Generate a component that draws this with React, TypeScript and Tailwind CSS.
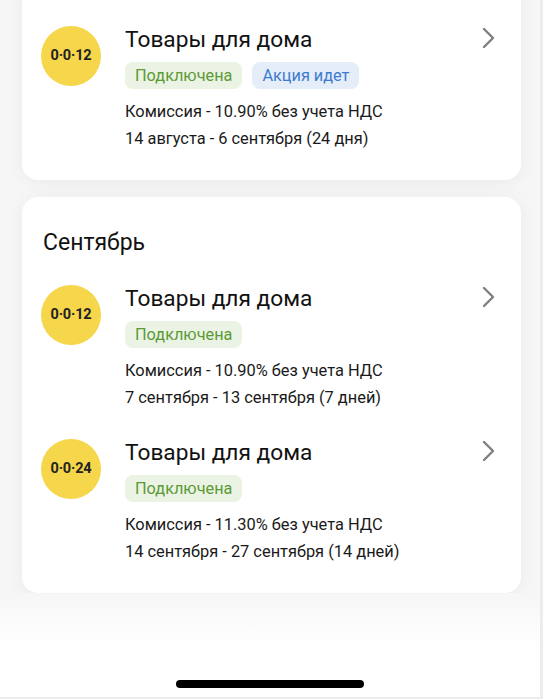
import React from "react";

type Item = {
  code: string;
  badges: { text: string; kind: "green" | "blue" }[];
  commission: string;
  dates: string;
};

function Chevron() {
  return (
    <svg width="14" height="22" viewBox="0 0 14 22" className="shrink-0">
      <polyline
        points="2,2 11,11 2,20"
        fill="none"
        stroke="#7f7f7f"
        strokeWidth="2.4"
        strokeLinecap="round"
        strokeLinejoin="round"
      />
    </svg>
  );
}

function Row({ item }: { item: Item }) {
  return (
    <div className="flex items-start">
      <div className="w-[60px] h-[60px] rounded-full bg-[#f6d64a] flex items-center justify-center shrink-0">
        <span className="text-[14.5px] font-bold text-[#222] tracking-[-0.2px]">{item.code}</span>
      </div>
      <div className="ml-[24px] flex-1 min-w-0">
        <div className="text-[22.7px] leading-[28px] text-[#111]">Товары для дома</div>
        <div className="mt-[8px] flex gap-[10px]">
          {item.badges.map((b) => (
            <span
              key={b.text}
              className={
                b.kind === "green"
                  ? "h-[27px] px-[10px] rounded-[8px] bg-[#ebf3e4] text-[#5c9a35] text-[16.3px] leading-[27px]"
                  : "h-[27px] px-[10px] rounded-[8px] bg-[#e5edf9] text-[#3d7bd0] text-[16.3px] leading-[27px]"
              }
            >
              {b.text}
            </span>
          ))}
        </div>
        <div className="mt-[9px] text-[16.4px] leading-[27px] text-[#1a1a1a]">{item.commission}</div>
        <div className="text-[16.4px] leading-[27px] text-[#1a1a1a]">{item.dates}</div>
      </div>
      <div className="mt-[1px] mr-[25px]">
        <Chevron />
      </div>
    </div>
  );
}

export default function App() {
  const first: Item = {
    code: "0·0·12",
    badges: [
      { text: "Подключена", kind: "green" },
      { text: "Акция идет", kind: "blue" },
    ],
    commission: "Комиссия - 10.90% без учета НДС",
    dates: "14 августа - 6 сентября (24 дня)",
  };
  const sep: Item[] = [
    {
      code: "0·0·12",
      badges: [{ text: "Подключена", kind: "green" }],
      commission: "Комиссия - 10.90% без учета НДС",
      dates: "7 сентября - 13 сентября (7 дней)",
    },
    {
      code: "0·0·24",
      badges: [{ text: "Подключена", kind: "green" }],
      commission: "Комиссия - 11.30% без учета НДС",
      dates: "14 сентября - 27 сентября (14 дней)",
    },
  ];

  return (
    <div
      className="w-[543px] h-[699px] overflow-hidden bg-white border-r-[3px] border-b-[2px] border-[#ececec] flex flex-col"
      style={{ fontFamily: "Roboto, 'Noto Sans', sans-serif" }}
    >
      <div className="bg-[#f6f6f6] pl-[22px] pr-[19px]">
        <div className="-mt-[20px] pt-[46px] pb-[28px] pl-[19px] bg-white rounded-[16px] shadow-[0_2px_18px_rgba(0,0,0,0.05)]">
          <Row item={first} />
        </div>
        <div className="mt-[17px] pt-[32px] pb-[28px] pl-[19px] bg-white rounded-[16px] shadow-[0_2px_18px_rgba(0,0,0,0.05)]">
          <div className="pl-[2px] text-[23px] leading-[28px] text-[#111]">Сентябрь</div>
          <div className="mt-[28px] flex flex-col gap-[28px]">
            {sep.map((it, i) => (
              <Row key={i} item={it} />
            ))}
          </div>
        </div>
      </div>
      <div className="flex-1 bg-gradient-to-b from-[#f6f6f6] via-white to-white flex flex-col justify-end items-center pb-[9px]">
        <div className="w-[188px] h-[8px] rounded-full bg-black" />
      </div>
    </div>
  );
}
